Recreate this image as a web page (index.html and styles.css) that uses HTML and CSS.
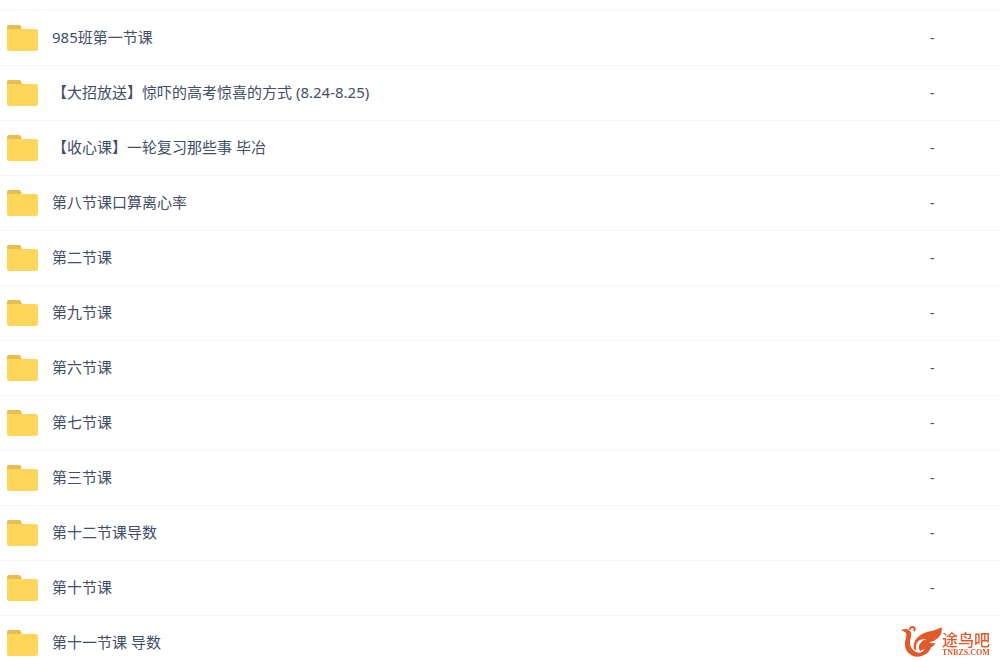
FILE: index.html
```
<!DOCTYPE html>
<html lang="zh-CN">
<head>
    <meta charset="UTF-8">
    <meta name="viewport" content="width=device-width, initial-scale=1.0">
    <title>文件列表</title>
    <link rel="stylesheet" href="styles.css">
</head>
<body>
    <!-- shared folder icon -->
    <svg class="symbols" aria-hidden="true">
        <symbol id="folder" viewBox="0 0 31 26">
            <path fill="#e6bd4f" d="M0 2a2 2 0 0 1 2-2h10q1.200 0 1.800 1l1.200 3v6H0z"/>
            <path fill="#ffd659" d="M0 4h29a2 2 0 0 1 2 2v18a2 2 0 0 1-2 2H2a2 2 0 0 1-2-2z"/>
        </symbol>
    </svg>

    <table class="file-list">
        <tbody>
            <tr>
                <td class="file-name"><div class="file"><svg class="icon"><use href="#folder"/></svg><span>985班第一节课</span></div></td>
                <td class="file-size">-</td>
            </tr>
            <tr>
                <td class="file-name"><div class="file"><svg class="icon"><use href="#folder"/></svg><span>【大招放送】惊吓的高考惊喜的方式 (8.24-8.25)</span></div></td>
                <td class="file-size">-</td>
            </tr>
            <tr>
                <td class="file-name"><div class="file"><svg class="icon"><use href="#folder"/></svg><span>【收心课】一轮复习那些事 毕冶</span></div></td>
                <td class="file-size">-</td>
            </tr>
            <tr>
                <td class="file-name"><div class="file"><svg class="icon"><use href="#folder"/></svg><span>第八节课口算离心率</span></div></td>
                <td class="file-size">-</td>
            </tr>
            <tr>
                <td class="file-name"><div class="file"><svg class="icon"><use href="#folder"/></svg><span>第二节课</span></div></td>
                <td class="file-size">-</td>
            </tr>
            <tr>
                <td class="file-name"><div class="file"><svg class="icon"><use href="#folder"/></svg><span>第九节课</span></div></td>
                <td class="file-size">-</td>
            </tr>
            <tr>
                <td class="file-name"><div class="file"><svg class="icon"><use href="#folder"/></svg><span>第六节课</span></div></td>
                <td class="file-size">-</td>
            </tr>
            <tr>
                <td class="file-name"><div class="file"><svg class="icon"><use href="#folder"/></svg><span>第七节课</span></div></td>
                <td class="file-size">-</td>
            </tr>
            <tr>
                <td class="file-name"><div class="file"><svg class="icon"><use href="#folder"/></svg><span>第三节课</span></div></td>
                <td class="file-size">-</td>
            </tr>
            <tr>
                <td class="file-name"><div class="file"><svg class="icon"><use href="#folder"/></svg><span>第十二节课导数</span></div></td>
                <td class="file-size">-</td>
            </tr>
            <tr>
                <td class="file-name"><div class="file"><svg class="icon"><use href="#folder"/></svg><span>第十节课</span></div></td>
                <td class="file-size">-</td>
            </tr>
            <tr>
                <td class="file-name"><div class="file"><svg class="icon"><use href="#folder"/></svg><span>第十一节课 导数</span></div></td>
                <td class="file-size"></td>
            </tr>
        </tbody>
    </table>

    <div class="watermark">
        <svg class="bird" viewBox="0 0 123 93" aria-hidden="true">
            <!-- head and body -->
            <path fill="#e2592b" d="M0 13Q8 9 14 9Q24 8 29 17Q33 26 28 40Q24 58 34 70Q42 79 54 80Q66 80 72 66L90 66Q78 90 52 92Q28 92 17 74Q8 58 14 38Q18 25 14 20Q9 15 0 13Z"/>
            <!-- crest -->
            <path fill="none" stroke="#e2592b" stroke-width="6" stroke-linecap="round" d="M27 9Q29 2 36 3Q44 6 40 13"/>
            <!-- wing -->
            <path fill="#e2592b" d="M39 70Q34 48 52 32Q66 20 88 16Q106 12 122 4Q125 21 112 35Q102 45 84 49Q94 53 104 51Q98 63 84 67Q66 68 58 76Q50 66 56 54Q62 44 76 39Q54 38 47 52Q43 60 46 74Z"/>
        </svg>
        <div class="brand">
            <span class="brand-name">途鸟吧</span>
            <span class="brand-url">TNBZS.COM</span>
        </div>
    </div>
</body>
</html>
```
FILE: styles.css
```
body {
    font-family: "Noto Sans", "Noto Sans CJK SC", sans-serif;
    background-color: #fff;
    color: #424e67;
    margin: 0;
    height: 100vh;
    overflow: hidden;
}

.symbols {
    display: none;
}

.file-list {
    width: 100%;
    margin-top: 10px;
    border-collapse: collapse;
}

.file-list td {
    height: 54px;
    padding: 0;
    border-top: 1px solid #f5f7f9;
    font-size: 15px;
    line-height: 20px;
}

.file {
    display: flex;
    align-items: center;
    gap: 14px;
    padding-left: 7px;
}

.file span {
    padding-bottom: 2px;
}

.icon {
    width: 31px;
    height: 26px;
}

.file-list .file-size {
    width: 70px;
    font-size: 14px;
}

.watermark {
    position: fixed;
    right: 10px;
    bottom: 4px;
    display: flex;
    align-items: flex-end;
    color: #e2592b;
}

.bird {
    width: 41px;
    height: 31px;
}

.brand {
    display: flex;
    flex-direction: column;
    gap: 2px;
}

.brand-name {
    font-family: "Noto Sans CJK SC", sans-serif;
    font-size: 16px;
    line-height: 16px;
    font-weight: 500;
}

.brand-url {
    font-family: "Liberation Serif", serif;
    font-size: 8px;
    line-height: 8px;
    font-weight: bold;
}
```
